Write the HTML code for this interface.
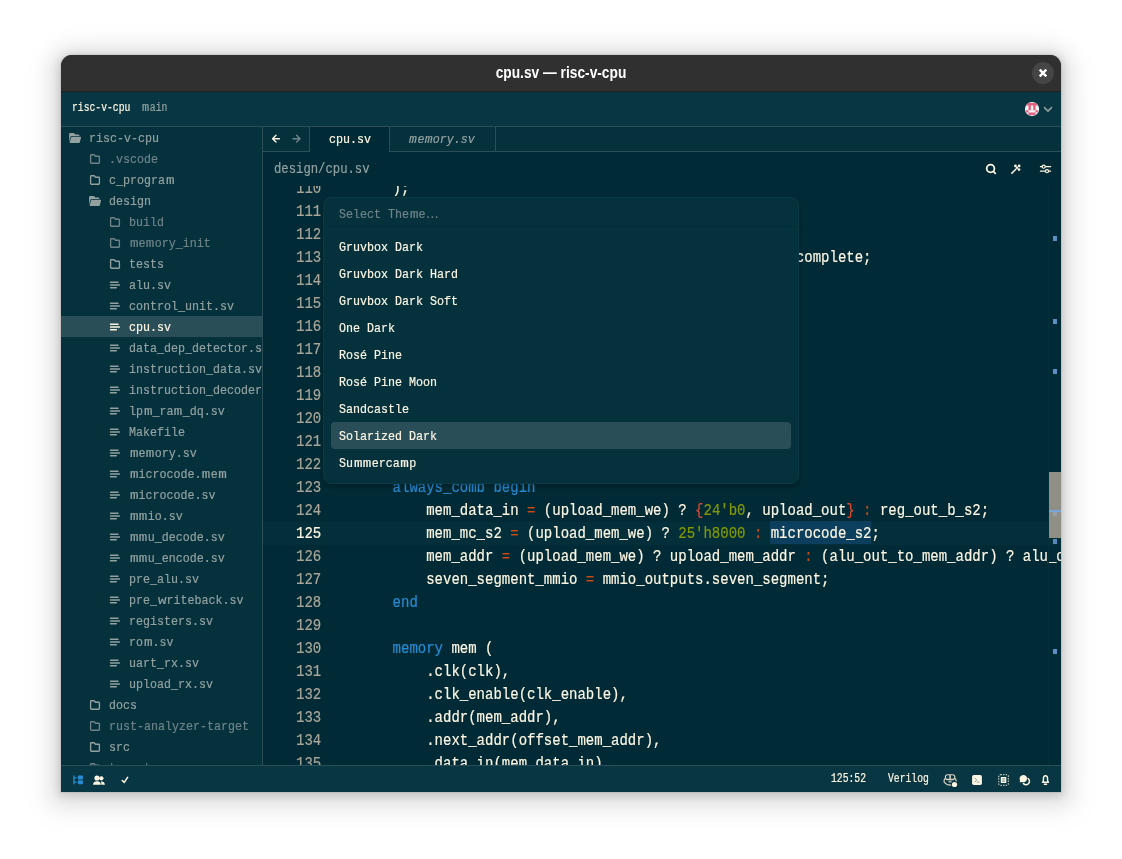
<!DOCTYPE html><html><head><meta charset="utf-8"><title>cpu.sv — risc-v-cpu</title><style>
*{box-sizing:border-box;margin:0;padding:0}
html,body{width:1122px;height:859px;overflow:hidden;background:#fff}
body{position:relative;font-family:"Liberation Mono",monospace;color:#fdf6e3}
.shadow{position:absolute;left:61px;top:55px;width:1000px;height:737px;border-radius:11px 11px 0 0;box-shadow:0 0 0 1px rgba(0,0,0,.06),0 2px 8px 2px rgba(0,0,0,.13),0 3px 20px 10px rgba(0,0,0,.09),0 6px 32px 16px rgba(0,0,0,.04)}
.win{position:absolute;left:61px;top:55px;width:1000px;height:737px;border-radius:11px 11px 0 0;overflow:hidden;background:#303030;will-change:transform}
.a{position:absolute}
.gt{left:0;top:0;width:1000px;height:37px;background:#303030;border-bottom:1px solid #212121}
.gtt{left:-100px;top:-1px;width:1200px;height:36px;text-align:center;font:bold 16.5px/36px "Liberation Sans",sans-serif;color:#fff;transform:scaleX(.833);white-space:pre}
.close{left:971px;top:7px;width:22px;height:22px;border-radius:50%;background:#454545}
.zt{left:0;top:37px;width:1000px;height:35px;background:#083743;border-bottom:1px solid #2b4f58}
.side{left:0;top:72px;width:202px;height:638px;background:#04313c;border-right:1px solid #2b4f58;overflow:hidden}
.tabbar{left:202px;top:72px;width:798px;height:25px;background:#04313c;border-bottom:1px solid #2b4f58}
.tool{left:202px;top:97px;width:798px;height:34px;background:#002b36}
.ed{left:202px;top:131px;width:798px;height:579px;background:#002b36;overflow:hidden}
.sb{left:0;top:710px;width:1000px;height:27px;background:#083743;border-top:1px solid #2b4f58}
.t{position:absolute;white-space:pre;transform:scaleX(0.875);transform-origin:0 0;-webkit-text-stroke:.2px}
.ui{font-size:13.33px;line-height:20px;height:20px}
.sm{font-size:12px;line-height:20px;height:20px;transform:scaleX(.81)}
.bc{font-size:14px;line-height:20px;height:20px}
.cd{font-size:16px;line-height:23px;height:23px}
.mu{color:#93a1a1}
.dim{color:#6f8389}
.ln{color:#aaa598}
.k{color:#288bd1}.o{color:#cb4b16}.n{color:#859904}.b{color:#dc4a32}
.row{position:absolute;left:0;width:201px;height:21px}
.sel{background:#294e58}
svg{position:absolute;overflow:visible}
.modal{left:262px;top:142px;width:476px;height:287px;background:#04313c;border:1px solid #0a3a46;border-radius:8px;box-shadow:0 3px 4px 1px rgba(0,0,0,.17),0 1px 2px rgba(0,0,0,.1)}
.el{display:inline-block;line-height:10px;font-family:"Liberation Sans",sans-serif;transform:scaleX(1.14);transform-origin:0 0;margin-left:.03em}
.w2{display:inline-block;width:.72em;transform:scaleX(1.12);transform-origin:0 0}
.w{display:inline-block;width:.766em;margin-left:.04em;transform:scaleX(1.22);transform-origin:0 0}
.msel{left:7px;top:224px;width:460px;height:27px;border-radius:4px;background:#294e58}
</style></head><body>
<div class="shadow"></div>
<div class="win">
<div class="a gt"><div class="a gtt">cpu.sv — risc-v-cpu</div><div class="a close"><svg width="22" height="22" viewBox="0 0 22 22" style="left:0;top:0"><path d="M7.7 7.7 L14.3 14.3 M14.3 7.7 L7.7 14.3" stroke="#fff" stroke-width="2.4" fill="none"/></svg></div></div>
<div class="a zt">
<div class="t sm" style="left:11.00px;top:6px;">risc-v-cpu</div>
<div class="t sm mu" style="left:81.00px;top:6px;"><span class="w">m</span>ain</div>
</div>
<div class="a side">
<div class="row" style="top:0px"><div class="t ui" style="left:28.40px;top:2px;color:#93a1a1">risc-v-cpu</div></div>
<div class="row" style="top:21px"><div class="t ui" style="left:48.40px;top:2px;color:#6f8389">.vscode</div></div>
<div class="row" style="top:42px"><div class="t ui" style="left:48.40px;top:2px;color:#93a1a1">c_progra<span class="w">m</span></div></div>
<div class="row" style="top:63px"><div class="t ui" style="left:48.40px;top:2px;color:#93a1a1">design</div></div>
<div class="row" style="top:84px"><div class="t ui" style="left:68.40px;top:2px;color:#6f8389">build</div></div>
<div class="row" style="top:105px"><div class="t ui" style="left:68.40px;top:2px;color:#6f8389"><span class="w">m</span>e<span class="w">m</span>ory_init</div></div>
<div class="row" style="top:126px"><div class="t ui" style="left:68.40px;top:2px;color:#93a1a1">tests</div></div>
<div class="row" style="top:147px"><div class="t ui" style="left:68.40px;top:2px;color:#93a1a1">alu.sv</div></div>
<div class="row" style="top:168px"><div class="t ui" style="left:68.40px;top:2px;color:#93a1a1">control_unit.sv</div></div>
<div class="row sel" style="top:189px"><div class="t ui" style="left:68.40px;top:2px;color:#fdf6e3">cpu.sv</div></div>
<div class="row" style="top:210px"><div class="t ui" style="left:68.40px;top:2px;color:#93a1a1">data_dep_detector.sv</div></div>
<div class="row" style="top:231px"><div class="t ui" style="left:68.40px;top:2px;color:#93a1a1">instruction_data.sv</div></div>
<div class="row" style="top:252px"><div class="t ui" style="left:68.40px;top:2px;color:#93a1a1">instruction_decoder.sv</div></div>
<div class="row" style="top:273px"><div class="t ui" style="left:68.40px;top:2px;color:#93a1a1">lp<span class="w">m</span>_ra<span class="w">m</span>_dq.sv</div></div>
<div class="row" style="top:294px"><div class="t ui" style="left:68.40px;top:2px;color:#93a1a1">Makefile</div></div>
<div class="row" style="top:315px"><div class="t ui" style="left:68.40px;top:2px;color:#93a1a1"><span class="w">m</span>e<span class="w">m</span>ory.sv</div></div>
<div class="row" style="top:336px"><div class="t ui" style="left:68.40px;top:2px;color:#93a1a1"><span class="w">m</span>icrocode.<span class="w">m</span>e<span class="w">m</span></div></div>
<div class="row" style="top:357px"><div class="t ui" style="left:68.40px;top:2px;color:#93a1a1"><span class="w">m</span>icrocode.sv</div></div>
<div class="row" style="top:378px"><div class="t ui" style="left:68.40px;top:2px;color:#93a1a1"><span class="w">m</span><span class="w">m</span>io.sv</div></div>
<div class="row" style="top:399px"><div class="t ui" style="left:68.40px;top:2px;color:#93a1a1"><span class="w">m</span><span class="w">m</span>u_decode.sv</div></div>
<div class="row" style="top:420px"><div class="t ui" style="left:68.40px;top:2px;color:#93a1a1"><span class="w">m</span><span class="w">m</span>u_encode.sv</div></div>
<div class="row" style="top:441px"><div class="t ui" style="left:68.40px;top:2px;color:#93a1a1">pre_alu.sv</div></div>
<div class="row" style="top:462px"><div class="t ui" style="left:68.40px;top:2px;color:#93a1a1">pre_<span class="w">w</span>riteback.sv</div></div>
<div class="row" style="top:483px"><div class="t ui" style="left:68.40px;top:2px;color:#93a1a1">registers.sv</div></div>
<div class="row" style="top:504px"><div class="t ui" style="left:68.40px;top:2px;color:#93a1a1">ro<span class="w">m</span>.sv</div></div>
<div class="row" style="top:525px"><div class="t ui" style="left:68.40px;top:2px;color:#93a1a1">uart_rx.sv</div></div>
<div class="row" style="top:546px"><div class="t ui" style="left:68.40px;top:2px;color:#93a1a1">upload_rx.sv</div></div>
<div class="row" style="top:567px"><div class="t ui" style="left:48.40px;top:2px;color:#93a1a1">docs</div></div>
<div class="row" style="top:588px"><div class="t ui" style="left:48.40px;top:2px;color:#6f8389">rust-analyzer-target</div></div>
<div class="row" style="top:609px"><div class="t ui" style="left:48.40px;top:2px;color:#93a1a1">src</div></div>
<div class="row" style="top:630px"><div class="t ui" style="left:48.40px;top:2px;color:#6f8389">target</div></div>
<svg width="201" height="638" viewBox="0 0 201 638" style="left:0;top:0"><g transform="translate(7.90 5.90)" fill="#93a1a1"><path d="M0.2 1.3 Q0.2 0.2 1.3 0.2 H4.6 Q5.2 0.2 5.6 0.7 L6.4 1.7 H9.6 Q10.5 1.7 10.5 2.6 V3.2 H2.9 Q1.9 3.2 1.6 4.2 L0.2 8.8 Z"/><path d="M3.1 3.9 H11.4 Q12.4 3.9 12.1 4.9 L10.9 9.3 Q10.6 10.2 9.7 10.2 H1.4 Q0.5 10.2 0.8 9.3 L2.2 4.7 Q2.4 3.9 3.1 3.9 Z"/></g><path transform="translate(28.90 27.05)" d="M0.7 1.4 Q0.7 0.7 1.4 0.7 H4.3 L5.6 2.2 H8.8 Q9.5 2.2 9.5 2.9 V8.5 Q9.5 9.2 8.8 9.2 H1.4 Q0.7 9.2 0.7 8.5 Z" fill="none" stroke="#6f8389" stroke-width="1.35" stroke-linejoin="round"/><path transform="translate(28.90 48.05)" d="M0.7 1.4 Q0.7 0.7 1.4 0.7 H4.3 L5.6 2.2 H8.8 Q9.5 2.2 9.5 2.9 V8.5 Q9.5 9.2 8.8 9.2 H1.4 Q0.7 9.2 0.7 8.5 Z" fill="none" stroke="#93a1a1" stroke-width="1.35" stroke-linejoin="round"/><g transform="translate(27.90 68.90)" fill="#93a1a1"><path d="M0.2 1.3 Q0.2 0.2 1.3 0.2 H4.6 Q5.2 0.2 5.6 0.7 L6.4 1.7 H9.6 Q10.5 1.7 10.5 2.6 V3.2 H2.9 Q1.9 3.2 1.6 4.2 L0.2 8.8 Z"/><path d="M3.1 3.9 H11.4 Q12.4 3.9 12.1 4.9 L10.9 9.3 Q10.6 10.2 9.7 10.2 H1.4 Q0.5 10.2 0.8 9.3 L2.2 4.7 Q2.4 3.9 3.1 3.9 Z"/></g><path transform="translate(48.90 90.05)" d="M0.7 1.4 Q0.7 0.7 1.4 0.7 H4.3 L5.6 2.2 H8.8 Q9.5 2.2 9.5 2.9 V8.5 Q9.5 9.2 8.8 9.2 H1.4 Q0.7 9.2 0.7 8.5 Z" fill="none" stroke="#6f8389" stroke-width="1.35" stroke-linejoin="round"/><path transform="translate(48.90 111.05)" d="M0.7 1.4 Q0.7 0.7 1.4 0.7 H4.3 L5.6 2.2 H8.8 Q9.5 2.2 9.5 2.9 V8.5 Q9.5 9.2 8.8 9.2 H1.4 Q0.7 9.2 0.7 8.5 Z" fill="none" stroke="#6f8389" stroke-width="1.35" stroke-linejoin="round"/><path transform="translate(48.90 132.05)" d="M0.7 1.4 Q0.7 0.7 1.4 0.7 H4.3 L5.6 2.2 H8.8 Q9.5 2.2 9.5 2.9 V8.5 Q9.5 9.2 8.8 9.2 H1.4 Q0.7 9.2 0.7 8.5 Z" fill="none" stroke="#93a1a1" stroke-width="1.35" stroke-linejoin="round"/><path transform="translate(48.80 158.00)" d="M0.75 -2.7 H8.2 M0.75 0 H9.6 M0.75 2.75 H6.5" fill="none" stroke="#93a1a1" stroke-width="1.5" stroke-linecap="round"/><path transform="translate(48.80 179.00)" d="M0.75 -2.7 H8.2 M0.75 0 H9.6 M0.75 2.75 H6.5" fill="none" stroke="#93a1a1" stroke-width="1.5" stroke-linecap="round"/><path transform="translate(48.80 200.00)" d="M0.75 -2.7 H8.2 M0.75 0 H9.6 M0.75 2.75 H6.5" fill="none" stroke="#fdf6e3" stroke-width="1.5" stroke-linecap="round"/><path transform="translate(48.80 221.00)" d="M0.75 -2.7 H8.2 M0.75 0 H9.6 M0.75 2.75 H6.5" fill="none" stroke="#93a1a1" stroke-width="1.5" stroke-linecap="round"/><path transform="translate(48.80 242.00)" d="M0.75 -2.7 H8.2 M0.75 0 H9.6 M0.75 2.75 H6.5" fill="none" stroke="#93a1a1" stroke-width="1.5" stroke-linecap="round"/><path transform="translate(48.80 263.00)" d="M0.75 -2.7 H8.2 M0.75 0 H9.6 M0.75 2.75 H6.5" fill="none" stroke="#93a1a1" stroke-width="1.5" stroke-linecap="round"/><path transform="translate(48.80 284.00)" d="M0.75 -2.7 H8.2 M0.75 0 H9.6 M0.75 2.75 H6.5" fill="none" stroke="#93a1a1" stroke-width="1.5" stroke-linecap="round"/><path transform="translate(48.80 305.00)" d="M0.75 -2.7 H8.2 M0.75 0 H9.6 M0.75 2.75 H6.5" fill="none" stroke="#93a1a1" stroke-width="1.5" stroke-linecap="round"/><path transform="translate(48.80 326.00)" d="M0.75 -2.7 H8.2 M0.75 0 H9.6 M0.75 2.75 H6.5" fill="none" stroke="#93a1a1" stroke-width="1.5" stroke-linecap="round"/><path transform="translate(48.80 347.00)" d="M0.75 -2.7 H8.2 M0.75 0 H9.6 M0.75 2.75 H6.5" fill="none" stroke="#93a1a1" stroke-width="1.5" stroke-linecap="round"/><path transform="translate(48.80 368.00)" d="M0.75 -2.7 H8.2 M0.75 0 H9.6 M0.75 2.75 H6.5" fill="none" stroke="#93a1a1" stroke-width="1.5" stroke-linecap="round"/><path transform="translate(48.80 389.00)" d="M0.75 -2.7 H8.2 M0.75 0 H9.6 M0.75 2.75 H6.5" fill="none" stroke="#93a1a1" stroke-width="1.5" stroke-linecap="round"/><path transform="translate(48.80 410.00)" d="M0.75 -2.7 H8.2 M0.75 0 H9.6 M0.75 2.75 H6.5" fill="none" stroke="#93a1a1" stroke-width="1.5" stroke-linecap="round"/><path transform="translate(48.80 431.00)" d="M0.75 -2.7 H8.2 M0.75 0 H9.6 M0.75 2.75 H6.5" fill="none" stroke="#93a1a1" stroke-width="1.5" stroke-linecap="round"/><path transform="translate(48.80 452.00)" d="M0.75 -2.7 H8.2 M0.75 0 H9.6 M0.75 2.75 H6.5" fill="none" stroke="#93a1a1" stroke-width="1.5" stroke-linecap="round"/><path transform="translate(48.80 473.00)" d="M0.75 -2.7 H8.2 M0.75 0 H9.6 M0.75 2.75 H6.5" fill="none" stroke="#93a1a1" stroke-width="1.5" stroke-linecap="round"/><path transform="translate(48.80 494.00)" d="M0.75 -2.7 H8.2 M0.75 0 H9.6 M0.75 2.75 H6.5" fill="none" stroke="#93a1a1" stroke-width="1.5" stroke-linecap="round"/><path transform="translate(48.80 515.00)" d="M0.75 -2.7 H8.2 M0.75 0 H9.6 M0.75 2.75 H6.5" fill="none" stroke="#93a1a1" stroke-width="1.5" stroke-linecap="round"/><path transform="translate(48.80 536.00)" d="M0.75 -2.7 H8.2 M0.75 0 H9.6 M0.75 2.75 H6.5" fill="none" stroke="#93a1a1" stroke-width="1.5" stroke-linecap="round"/><path transform="translate(48.80 557.00)" d="M0.75 -2.7 H8.2 M0.75 0 H9.6 M0.75 2.75 H6.5" fill="none" stroke="#93a1a1" stroke-width="1.5" stroke-linecap="round"/><path transform="translate(28.90 573.05)" d="M0.7 1.4 Q0.7 0.7 1.4 0.7 H4.3 L5.6 2.2 H8.8 Q9.5 2.2 9.5 2.9 V8.5 Q9.5 9.2 8.8 9.2 H1.4 Q0.7 9.2 0.7 8.5 Z" fill="none" stroke="#93a1a1" stroke-width="1.35" stroke-linejoin="round"/><path transform="translate(28.90 594.05)" d="M0.7 1.4 Q0.7 0.7 1.4 0.7 H4.3 L5.6 2.2 H8.8 Q9.5 2.2 9.5 2.9 V8.5 Q9.5 9.2 8.8 9.2 H1.4 Q0.7 9.2 0.7 8.5 Z" fill="none" stroke="#6f8389" stroke-width="1.35" stroke-linejoin="round"/><path transform="translate(28.90 615.05)" d="M0.7 1.4 Q0.7 0.7 1.4 0.7 H4.3 L5.6 2.2 H8.8 Q9.5 2.2 9.5 2.9 V8.5 Q9.5 9.2 8.8 9.2 H1.4 Q0.7 9.2 0.7 8.5 Z" fill="none" stroke="#93a1a1" stroke-width="1.35" stroke-linejoin="round"/><path transform="translate(28.90 636.05)" d="M0.7 1.4 Q0.7 0.7 1.4 0.7 H4.3 L5.6 2.2 H8.8 Q9.5 2.2 9.5 2.9 V8.5 Q9.5 9.2 8.8 9.2 H1.4 Q0.7 9.2 0.7 8.5 Z" fill="none" stroke="#6f8389" stroke-width="1.35" stroke-linejoin="round"/></svg>
</div>
<div class="a tabbar">
<div class="a" style="left:0;top:0;width:47px;height:24px;border-right:1px solid #2b4f58"></div>
<div class="a" style="left:47px;top:0;width:80px;height:25px;background:#002b36;border-right:1px solid #2b4f58"></div>
<div class="t ui" style="left:65.50px;top:3px;">cpu.sv</div>
<div class="a" style="left:127px;top:0;width:106px;height:24px;border-right:1px solid #2b4f58"></div>
<div class="t ui mu" style="left:146.00px;top:3px;font-style:italic"><span class="w2">m</span>e<span class="w2">m</span>ory.sv</div>
</div>
<div class="a tool">
<div class="t bc mu" style="left:11.00px;top:7px;">design/cpu.sv</div>
</div>
<div class="a ed">
<div class="a" style="left:0;top:336px;width:798px;height:23px;background:#032f3a"></div>
<div class="a" style="left:507px;top:335px;width:101px;height:23px;background:#0b3f5d"></div>
<div class="t cd ln" style="left:33.00px;top:-8px;">110</div>
<div class="t cd" style="left:95.60px;top:-8px;">    );</div>
<div class="t cd ln" style="left:33.00px;top:15px;">111</div>
<div class="t cd ln" style="left:33.00px;top:38px;">112</div>
<div class="t cd ln" style="left:33.00px;top:61px;">113</div>
<div class="t cd" style="left:95.60px;top:61px;">                                                    complete;</div>
<div class="t cd ln" style="left:33.00px;top:84px;">114</div>
<div class="t cd ln" style="left:33.00px;top:107px;">115</div>
<div class="t cd ln" style="left:33.00px;top:130px;">116</div>
<div class="t cd ln" style="left:33.00px;top:153px;">117</div>
<div class="t cd ln" style="left:33.00px;top:176px;">118</div>
<div class="t cd ln" style="left:33.00px;top:199px;">119</div>
<div class="t cd ln" style="left:33.00px;top:222px;">120</div>
<div class="t cd ln" style="left:33.00px;top:245px;">121</div>
<div class="t cd ln" style="left:33.00px;top:268px;">122</div>
<div class="t cd ln" style="left:33.00px;top:291px;">123</div>
<div class="t cd" style="left:95.60px;top:291px;">    <span class="k">always_comb</span> <span class="k">begin</span></div>
<div class="t cd ln" style="left:33.00px;top:314px;">124</div>
<div class="t cd" style="left:95.60px;top:314px;">        mem_data_in <span class="o">=</span> (upload_mem_we) ? <span class="b">{</span><span class="n">24&#x27;b0</span>, upload_out<span class="b">}</span> <span class="o">:</span> reg_out_b_s2;</div>
<div class="t cd" style="left:33.00px;top:337px;">125</div>
<div class="t cd" style="left:95.60px;top:337px;">        mem_mc_s2 <span class="o">=</span> (upload_mem_we) ? <span class="n">25&#x27;h8000</span> <span class="o">:</span> microcode_s2;</div>
<div class="t cd ln" style="left:33.00px;top:360px;">126</div>
<div class="t cd" style="left:95.60px;top:360px;">        mem_addr <span class="o">=</span> (upload_mem_we) ? upload_mem_addr <span class="o">:</span> (alu_out_to_mem_addr) ? alu_out</div>
<div class="t cd ln" style="left:33.00px;top:383px;">127</div>
<div class="t cd" style="left:95.60px;top:383px;">        seven_segment_mmio <span class="o">=</span> mmio_outputs.seven_segment;</div>
<div class="t cd ln" style="left:33.00px;top:406px;">128</div>
<div class="t cd" style="left:95.60px;top:406px;">    <span class="k">end</span></div>
<div class="t cd ln" style="left:33.00px;top:429px;">129</div>
<div class="t cd ln" style="left:33.00px;top:452px;">130</div>
<div class="t cd" style="left:95.60px;top:452px;">    <span class="k">memory</span> mem (</div>
<div class="t cd ln" style="left:33.00px;top:475px;">131</div>
<div class="t cd" style="left:95.60px;top:475px;">        .clk(clk),</div>
<div class="t cd ln" style="left:33.00px;top:498px;">132</div>
<div class="t cd" style="left:95.60px;top:498px;">        .clk_enable(clk_enable),</div>
<div class="t cd ln" style="left:33.00px;top:521px;">133</div>
<div class="t cd" style="left:95.60px;top:521px;">        .addr(mem_addr),</div>
<div class="t cd ln" style="left:33.00px;top:544px;">134</div>
<div class="t cd" style="left:95.60px;top:544px;">        .next_addr(offset_mem_addr),</div>
<div class="t cd ln" style="left:33.00px;top:567px;">135</div>
<div class="t cd" style="left:95.60px;top:567px;">        .data_in(mem_data_in),</div>
<div class="a" style="left:785px;top:0;width:1px;height:579px;background:#032f3b"></div>
<div class="a" style="left:790px;top:50px;width:4px;height:5px;background:#5e8dc2"></div>
<div class="a" style="left:790px;top:133px;width:4px;height:5px;background:#5e8dc2"></div>
<div class="a" style="left:790px;top:183px;width:4px;height:5px;background:#5e8dc2"></div>
<div class="a" style="left:790px;top:463px;width:4px;height:5px;background:#5e8dc2"></div>
<div class="a" style="left:786px;top:286px;width:12px;height:66px;background:#908f85"></div>
<div class="a" style="left:790px;top:326px;width:4px;height:4px;background:#9a9fa3"></div>
<div class="a" style="left:786px;top:324px;width:12px;height:2px;background:#7ba5d8"></div>
<div class="a" style="left:790px;top:353px;width:4px;height:5px;background:#5b86b8"></div>
</div>
<svg width="1000" height="737" viewBox="61 55 1000 737" style="left:0;top:0"><clipPath id="av"><circle cx="1032.05" cy="109" r="7.1"/></clipPath><g clip-path="url(#av)"><rect x="1024" y="101" width="17" height="17" fill="#f4f4f4"/><path fill="#e0607e" d="M1026.12 103.08 H1037.97 V105.45 H1026.12 Z M1028.49 103.08 H1030.87 V110.19 H1028.49 Z M1033.23 103.08 H1035.61 V110.19 H1033.23 Z M1026.12 110.19 H1028.49 V112.56 H1026.12 Z M1035.61 110.19 H1037.97 V112.56 H1035.61 Z M1028.49 112.56 H1035.61 V114.93 H1028.49 Z"/></g><path d="M1044.5 107.6 L1048 111.1 L1051.5 107.6" stroke="#93a1a1" stroke-width="1.5" fill="none" stroke-linecap="round" stroke-linejoin="round"/><path d="M276 135.3 L272.6 138.7 L276 142.1 M272.8 138.7 H279.4" stroke="#fdf6e3" stroke-width="1.4" fill="none" stroke-linecap="round" stroke-linejoin="round"/><path d="M296.6 135.3 L300 138.7 L296.6 142.1 M299.8 138.7 H293" stroke="#6f8389" stroke-width="1.4" fill="none" stroke-linecap="round" stroke-linejoin="round"/><circle cx="990.55" cy="168.5" r="3.85" stroke="#fdf6e3" stroke-width="1.8" fill="none"/><path d="M993.6 171.6 L995.3 173.3" stroke="#fdf6e3" stroke-width="1.7" stroke-linecap="round"/><path d="M1011.8 173.2 L1015.8 169.2" stroke="#fdf6e3" stroke-width="1.6" stroke-linecap="round"/><circle cx="1015.4" cy="165.9" r="1.35" fill="#fdf6e3"/><circle cx="1019.1" cy="165.9" r="1.35" fill="#fdf6e3"/><circle cx="1019.0" cy="169.6" r="1.35" fill="#fdf6e3"/><circle cx="1017.0" cy="167.8" r="1.2" fill="#fdf6e3"/><path d="M1040.4 166.7 H1050.6 M1040.4 171.2 H1050.6" stroke="#fdf6e3" stroke-width="1.2" stroke-linecap="round"/><circle cx="1043.7" cy="166.7" r="1.55" fill="#002b36" stroke="#fdf6e3" stroke-width="1.2"/><circle cx="1047" cy="171.2" r="1.55" fill="#002b36" stroke="#fdf6e3" stroke-width="1.2"/></svg>
<div class="a sb">
<div class="t sm" style="left:769.50px;top:3px;">125:52</div>
<div class="t sm" style="left:827.00px;top:3px;">Verilog</div>
</div>
<svg width="1000" height="737" viewBox="61 55 1000 737" style="left:0;top:0"><path d="M73.9 775.6 V784.2 M73.9 777.8 H76.6 M73.9 782.2 H76.6" stroke="#288bd1" stroke-width="1.3" fill="none"/><rect x="77.8" y="775.5" width="5.2" height="4" rx="1" fill="#288bd1"/><rect x="77.8" y="780.3" width="5.2" height="4" rx="1" fill="#288bd1"/><circle cx="97" cy="778" r="2.6" fill="#fdf6e3"/><circle cx="101.4" cy="778.3" r="2.1" fill="#fdf6e3"/><path d="M93.1 784.8 Q93.1 781.3 97 781.3 Q100.9 781.3 100.9 784.8 Z" fill="#fdf6e3"/><path d="M101.4 784.8 Q101.6 782.6 100.6 781.5 Q104.8 781 104.8 784.8 Z" fill="#fdf6e3"/><path d="M122.2 780.5 L124.3 782.4 L127.6 777.4" stroke="#fdf6e3" stroke-width="1.5" fill="none" stroke-linecap="round" stroke-linejoin="round"/><rect x="945.4" y="774.8" width="9.4" height="4.6" rx="2.2" fill="none" stroke="#d6d1c0" stroke-width="1.1"/><path d="M950.1 775 V779.2" stroke="#d6d1c0" stroke-width="1.6"/><path d="M945.6 778.4 Q944.1 779 944.1 780.6 V782 Q946.4 785.1 950.1 785.1 Q953.8 785.1 956.1 782 V780.6 Q956.1 779 954.6 778.4" fill="none" stroke="#d6d1c0" stroke-width="1.2" stroke-linejoin="round"/><path d="M946.3 779.7 H953.9" stroke="#d6d1c0" stroke-width="1.1"/><rect x="948.6" y="780.8" width="3" height="1.8" fill="#d6d1c0" opacity=".8"/><circle cx="954.5" cy="784.5" r="3.5" fill="#083743"/><circle cx="954.5" cy="784.5" r="2.6" fill="#fdf6e3"/><rect x="972.1" y="775" width="9.8" height="9.9" rx="1.7" fill="#fdf6e3"/><path d="M975 778 L976.7 780 L975 782 M977.3 782.1 H979" stroke="#083743" stroke-opacity=".55" stroke-width="0.8" fill="none" stroke-linecap="round" stroke-linejoin="round"/><rect x="998.7" y="774.7" width="9.7" height="10.6" rx="1.8" fill="none" stroke="#fdf6e3" stroke-opacity=".7" stroke-width="1.3" stroke-dasharray="1.4 1.15"/><rect x="1000.8" y="777.1" width="5.5" height="5.9" rx="0.6" fill="#fdf6e3"/><path d="M1002.3 778.8 H1004.8 L1002.3 781.3 H1004.8" stroke="#083743" stroke-opacity=".6" stroke-width="0.8" fill="none" stroke-linejoin="round"/><path d="M1027.2 778.1 A3.4 3.4 0 1 1 1023.1 783" stroke="#fdf6e3" stroke-width="1.5" fill="none"/><path d="M1023.3 774.9 A3.75 3.7 0 1 1 1021.6 781.9 Q1020.5 782.4 1019.6 782.3 Q1020.2 781.3 1020 780.3 A3.75 3.7 0 0 1 1023.3 774.9 Z" fill="#fdf6e3" stroke="#083743" stroke-width="0.9" paint-order="stroke"/><path d="M1042.5 782.2 Q1043.4 781.4 1043.4 780.2 V778.9 Q1043.4 775.8 1045.5 775.8 Q1047.6 775.8 1047.6 778.9 V780.2 Q1047.6 781.4 1048.5 782.2 Z" fill="none" stroke="#fdf6e3" stroke-width="1.4" stroke-linejoin="round"/><path d="M1044.4 784.3 H1046.6" stroke="#fdf6e3" stroke-width="1.4" stroke-linecap="round"/></svg>
<div class="a modal">
<div class="a" style="left:-1px;top:31px;width:476px;height:1px;background:#073641"></div>
<div class="a msel"></div>
<div class="t ui dim" style="left:14.60px;top:7px;">Select The<span class="w">m</span>e<span class="el">…</span></div>
<div class="t ui" style="left:14.60px;top:40px;">Gruvbox Dark</div>
<div class="t ui" style="left:14.60px;top:67px;">Gruvbox Dark Hard</div>
<div class="t ui" style="left:14.60px;top:94px;">Gruvbox Dark Soft</div>
<div class="t ui" style="left:14.60px;top:121px;">One Dark</div>
<div class="t ui" style="left:14.60px;top:148px;">Rosé Pine</div>
<div class="t ui" style="left:14.60px;top:175px;">Rosé Pine Moon</div>
<div class="t ui" style="left:14.60px;top:202px;">Sandcastle</div>
<div class="t ui" style="left:14.60px;top:229px;">Solarized Dark</div>
<div class="t ui" style="left:14.60px;top:256px;">Su<span class="w">m</span><span class="w">m</span>erca<span class="w">m</span>p</div>
</div>
</div></body></html>
